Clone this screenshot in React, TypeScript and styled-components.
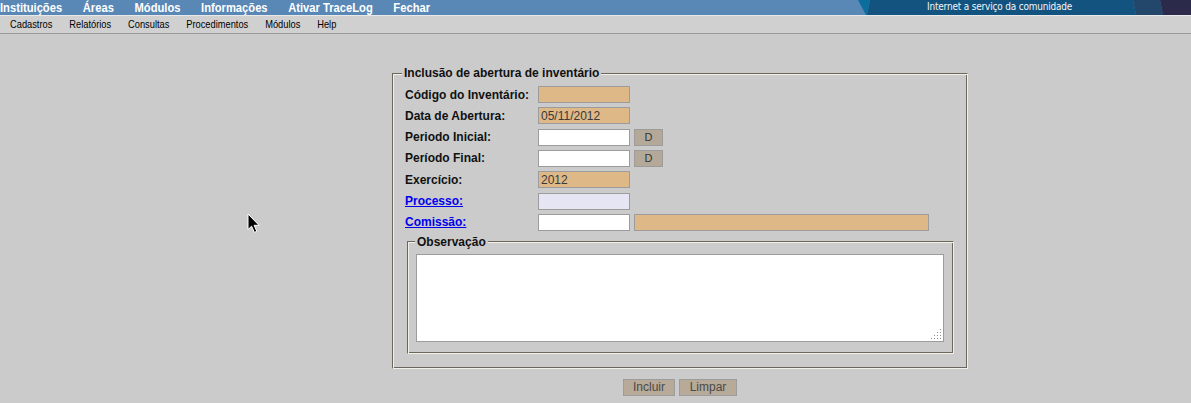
import styled, { createGlobalStyle } from 'styled-components';

const GlobalStyle = createGlobalStyle`
  html, body {
    margin: 0;
    padding: 0;
    background: #cbcbcb;
  }
  body {
    font-family: "Liberation Sans", Arial, sans-serif;
    width: 1191px;
    height: 403px;
    overflow: hidden;
    position: relative;
  }
`;

const topItems = ['Instituições', 'Áreas', 'Módulos', 'Informações', 'Ativar TraceLog', 'Fechar'];
const subItems = ['Cadastros', 'Relatórios', 'Consultas', 'Procedimentos', 'Módulos', 'Help'];

// grip dots drawn in the corner of the notes box
const gripDots: [number, number][] = [
  [9, 0],
  [6, 3], [9, 3],
  [3, 6], [6, 6], [9, 6],
  [0, 9], [3, 9], [6, 9], [9, 9],
];

export default function App() {
  return (
    <>
      <GlobalStyle />
      <TopBar>
        <TopMenuWrap>
          <TopMenu>
            {topItems.map((t) => (
              <TopItem key={t} href="#">
                {t}
              </TopItem>
            ))}
          </TopMenu>
        </TopMenuWrap>
        <Banner>
          <BannerArt viewBox="0 0 341 15" preserveAspectRatio="none">
            <polygon points="8,0 20,0 17,15 16,15" fill="#0b6e9d" />
            <polygon points="20,0 283,0 286,15 17,15" fill="#13537f" />
            <polygon points="283,0 310,0 313,15 286,15" fill="#22476a" />
            <polygon points="310,0 341,0 341,15 313,15" fill="#2b2a4b" />
          </BannerArt>
          <BannerText>Internet a serviço da comunidade</BannerText>
        </Banner>
      </TopBar>
      <MenuBar>
        <SubMenu>
          {subItems.map((t) => (
            <MenuItem key={t}>{t}</MenuItem>
          ))}
        </SubMenu>
      </MenuBar>

      <Content>
        <Group>
          <Legend>Inclusão de abertura de inventário</Legend>
          <Rows>
            <Row>
              <Label>Código do Inventário:</Label>
              <Field $bg="#deb887" readOnly defaultValue="" />
            </Row>
            <Row>
              <Label>Data de Abertura:</Label>
              <Field $bg="#deb887" readOnly defaultValue="05/11/2012" />
            </Row>
            <Row>
              <Label>Periodo Inicial:</Label>
              <Field defaultValue="" />
              <SmallButton>D</SmallButton>
            </Row>
            <Row>
              <Label>Período Final:</Label>
              <Field defaultValue="" />
              <SmallButton>D</SmallButton>
            </Row>
            <Row>
              <Label>Exercício:</Label>
              <Field $bg="#deb887" readOnly defaultValue="2012" />
            </Row>
            <Row>
              <Label>
                <LinkLabel href="#">Processo:</LinkLabel>
              </Label>
              <Field $bg="#e6e5f4" readOnly defaultValue="" />
            </Row>
            <Row>
              <Label>
                <LinkLabel href="#">Comissão:</LinkLabel>
              </Label>
              <Field defaultValue="" />
              <Field $bg="#deb887" $w={295} readOnly defaultValue="" />
            </Row>
          </Rows>
          <InnerGroup>
            <InnerLegend>Observação</InnerLegend>
            <NotesWrap>
              <Notes />
              <Grip width="11" height="11" viewBox="0 0 11 11">
                {gripDots.map(([x, y]) => (
                  <rect key={`${x}-${y}`} x={x} y={y} width="1" height="1" fill="#8a8a8a" />
                ))}
              </Grip>
            </NotesWrap>
          </InnerGroup>
        </Group>
        <Actions>
          <ActionButton style={{ width: 52 }}>Incluir</ActionButton>
          <ActionButton style={{ width: 58 }}>Limpar</ActionButton>
        </Actions>
      </Content>

      <Cursor width="14" height="21" viewBox="0 0 14 21">
        <path
          d="M1 1 L1 16.5 L4.6 13.2 L7.4 19.4 L9.8 18.3 L7.1 12.3 L12 12.3 Z"
          fill="#000"
          stroke="#fff"
          strokeWidth="1"
          strokeLinejoin="round"
        />
      </Cursor>
    </>
  );
}

const TopBar = styled.div`
  display: flex;
  height: 15px;
  background: #5a88b6;
  border-bottom: 1px solid #e9e9e9;
  overflow: hidden;
`;

const TopMenuWrap = styled.div`
  flex: 1;
`;

// the original menu uses a narrow face; squeeze Arial to match
const TopMenu = styled.nav`
  display: flex;
  gap: 24px;
  transform: scaleX(0.86);
  transform-origin: left center;
`;

const TopItem = styled.a`
  font-weight: bold;
  font-size: 13px;
  line-height: 16px;
  color: #fff;
  text-decoration: none;
  white-space: nowrap;
`;

const Banner = styled.div`
  position: relative;
  display: flex;
  align-items: flex-start;
  width: 341px;
  height: 15px;
  padding-left: 77px;
  box-sizing: border-box;
`;

const BannerArt = styled.svg`
  position: absolute;
  inset: 0;
  width: 100%;
  height: 100%;
`;

const BannerText = styled.span`
  position: relative;
  font-family: "DejaVu Sans", sans-serif;
  font-size: 10px;
  letter-spacing: -0.2px;
  line-height: 13px;
  color: #f2f5f8;
  white-space: nowrap;
  transform: scaleX(0.895);
  transform-origin: left center;
`;

const MenuBar = styled.div`
  height: 17px;
  padding-left: 10px;
  background: #d0d0d0;
  border-bottom: 1px solid #999;
`;

const SubMenu = styled.div`
  display: flex;
  gap: 20px;
  transform: scaleX(0.845);
  transform-origin: left center;
`;

const MenuItem = styled.span`
  font-size: 11px;
  line-height: 17px;
  color: #000;
  white-space: nowrap;
  cursor: default;
`;

const Content = styled.main`
  width: 576px;
  margin: 32px 0 0 392px;
`;

const groove = `
  border: 1px solid;
  border-color: #6b675c #f3f0e8 #f3f0e8 #6b675c;
  box-shadow: inset 1px 1px 0 #f3f0e8, inset -1px -1px 0 #6b675c;
`;

const Group = styled.fieldset`
  box-sizing: border-box;
  width: 576px;
  margin: 0;
  padding: 6px 11px 14px 12px;
  ${groove}
`;

const Legend = styled.legend`
  margin-left: -3px;
  padding: 0 2px;
  background: #cbcbcb;
  font-size: 12px;
  line-height: 14px;
  font-weight: bold;
  color: #111;
`;

const Rows = styled.div`
  display: grid;
  grid-auto-rows: 17px;
  row-gap: 4.33px;
`;

const Row = styled.div`
  display: flex;
  align-items: center;
  gap: 4px;
`;

const Label = styled.span`
  width: 129px;
  font-size: 12px;
  font-weight: bold;
  color: #111;
  white-space: nowrap;
`;

const LinkLabel = styled.a`
  color: #0000ee;
  text-decoration: underline;
`;

const Field = styled.input<{ $bg?: string; $w?: number }>`
  box-sizing: border-box;
  width: ${(p) => p.$w ?? 92}px;
  height: 17px;
  margin: 0;
  padding: 0 2px;
  border: 1px solid #9c9c9c;
  background: ${(p) => p.$bg ?? '#fff'};
  font-family: "Liberation Sans", Arial, sans-serif;
  font-size: 12px;
  color: #3a3a3a;
  outline: none;
`;

const SmallButton = styled.button`
  box-sizing: border-box;
  width: 29px;
  height: 17px;
  margin: 0;
  padding: 0;
  border: 1px solid #9c9c9c;
  background: #b4a999;
  font-family: "Liberation Sans", Arial, sans-serif;
  font-size: 11px;
  color: #333;
`;

const InnerGroup = styled.fieldset`
  margin: 4px 2px 0;
  padding: 5px 9px 11px 8px;
  ${groove}
`;

const InnerLegend = styled.legend`
  padding: 0 2px;
  margin-left: -1px;
  background: #cbcbcb;
  font-size: 12px;
  line-height: 14px;
  font-weight: bold;
  color: #111;
`;

const NotesWrap = styled.div`
  position: relative;
  width: 528px;
  height: 88px;
`;

const Notes = styled.textarea`
  display: block;
  box-sizing: border-box;
  width: 100%;
  height: 100%;
  margin: 0;
  border: 1px solid #9c9c9c;
  background: #fff;
  resize: none;
  outline: none;
`;

const Grip = styled.svg`
  position: absolute;
  right: 2px;
  bottom: 2px;
  pointer-events: none;
`;

const Actions = styled.div`
  display: flex;
  justify-content: center;
  gap: 4px;
  margin-top: 10px;
`;

const ActionButton = styled.button`
  box-sizing: border-box;
  height: 17px;
  padding: 0;
  border: 1px solid #9c9c9c;
  background: #b7aa98;
  font-family: "Liberation Sans", Arial, sans-serif;
  font-size: 12px;
  color: #4a4a4a;
`;

const Cursor = styled.svg`
  position: absolute;
  left: 247px;
  top: 213px;
  pointer-events: none;
`;
